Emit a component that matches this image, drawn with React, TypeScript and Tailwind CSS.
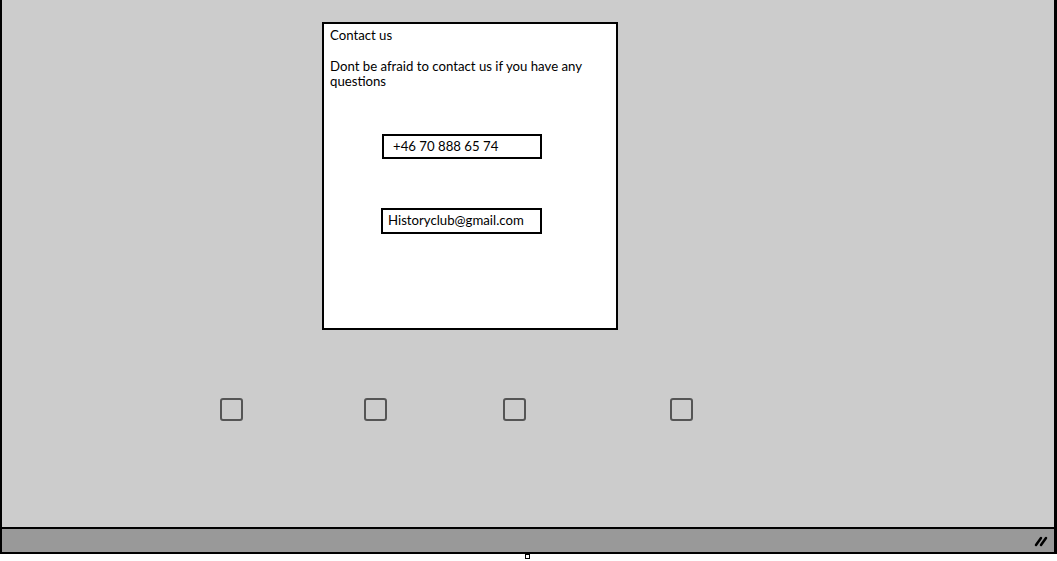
const checkboxes = ['ml-[218px]', 'ml-[121px]', 'ml-[116px]', 'ml-[144px]'];

const App = () => {
    return (
        <div className="w-[1057px] h-[561px] flex flex-col bg-white overflow-hidden" style={{ fontFamily: 'Lato, "Open Sans", sans-serif' }}>
            {/* Canvas */}
            <div className="h-[527px] shrink-0 bg-[#cccccc] border-l-2 border-r-[3px] border-black">
                {/* Contact card */}
                <div className="ml-[320px] mt-[22px] w-[296px] h-[308px] bg-white border-2 border-black flex flex-col text-[13.2px] text-black pl-[6px] pt-[3px]">
                    <p className="leading-[16px]">Contact us</p>
                    <p className="mt-[16px] leading-[15px] pr-6">Dont be afraid to contact us if you have any questions</p>

                    <div className="mt-[45px] ml-[52px] w-[160px] h-[25px] border-2 border-black flex items-center pl-[9px]">
                        +46 70 888 65 74
                    </div>
                    <div className="mt-[49px] ml-[51px] w-[161px] h-[26px] border-2 border-black flex items-center pl-[5px]">
                        Historyclub@gmail.com
                    </div>
                </div>

                {/* Checkboxes */}
                <div className="flex mt-[68px]">
                    {checkboxes.map((m, i) => (
                        <div key={i} className={`${m} w-[23px] h-[23px] border-2 border-[#555555] rounded-[3px]`}></div>
                    ))}
                </div>
            </div>

            {/* Status bar */}
            <div className="h-[27px] shrink-0 bg-[#999999] border-t-2 border-b-2 border-black border-l-2 border-r-[3px] flex items-center justify-end pr-[6px]">
                <svg width="14" height="12" viewBox="0 0 14 12">
                    <line x1="2" y1="10" x2="7" y2="3" stroke="black" strokeWidth="2.5" strokeLinecap="round" />
                    <line x1="7" y1="10" x2="12" y2="3" stroke="black" strokeWidth="2.5" strokeLinecap="round" />
                </svg>
            </div>
            <div className="relative flex-1">
                <div className="absolute left-[525px] top-[0px] w-[5px] h-[5px] border border-black bg-white"></div>
            </div>
        </div>
    );
};

export default App;
